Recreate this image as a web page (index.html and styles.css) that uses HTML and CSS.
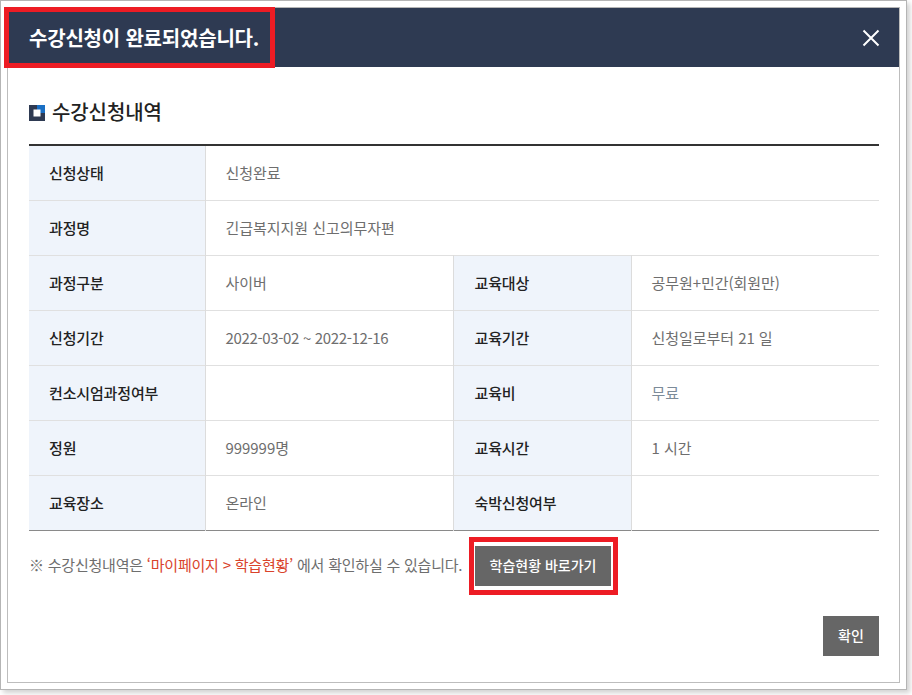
FILE: index.html
```html
<!DOCTYPE html>
<html lang="ko">
<head>
<meta charset="utf-8">
<title>수강신청</title>
<link rel="stylesheet" href="styles.css">
</head>
<body>
<div class="frame">
  <div class="modal">
    <header class="head">
      <h1 class="head-title">수강신청이 완료되었습니다.</h1>
      <svg class="close" width="18" height="18" viewBox="0 0 18 18"><path d="M1.5 1.5L16.5 16.5M16.5 1.5L1.5 16.5" stroke="#fff" stroke-width="2" fill="none"/></svg>
      <span class="mark mark-title"></span>
    </header>
    <main class="body">
      <h2 class="section">
        <svg class="bullet" width="16" height="16" viewBox="0 0 16 16"><rect width="16" height="16" fill="#2e3a52"/><rect x="8" width="8" height="8" fill="#1a6fc4"/><rect x="4.5" y="4.5" width="7" height="7" fill="#fff"/></svg>
        <span class="section-text">수강신청내역</span>
      </h2>
      <table class="info">
        <colgroup><col class="c1"><col class="c2"><col class="c3"><col class="c4"></colgroup>
        <tr><th>신청상태</th><td colspan="3">신청완료</td></tr>
        <tr><th>과정명</th><td colspan="3">긴급복지지원 신고의무자편</td></tr>
        <tr><th>과정구분</th><td>사이버</td><th>교육대상</th><td>공무원+민간(회원만)</td></tr>
        <tr><th>신청기간</th><td class="date">2022-03-02 ~ 2022-12-16</td><th>교육기간</th><td>신청일로부터 21 일</td></tr>
        <tr><th>컨소시엄과정여부</th><td></td><th>교육비</th><td class="blue">무료</td></tr>
        <tr><th>정원</th><td>999999명</td><th>교육시간</th><td>1 시간</td></tr>
        <tr><th>교육장소</th><td>온라인</td><th>숙박신청여부</th><td></td></tr>
      </table>
      <div class="notice">
        <p class="notice-text">※ 수강신청내역은 <span class="red">‘마이페이지 &gt; 학습현황’</span> 에서 확인하실 수 있습니다.</p>
        <div class="go-wrap">
          <a class="btn btn-go">학습현황 바로가기</a>
          <span class="mark mark-go"></span>
        </div>
      </div>
      <div class="foot"><a class="btn btn-ok">확인</a></div>
    </main>
  </div>
</div>
</body>
</html>
```
FILE: styles.css
```css
* { box-sizing: border-box; }
html, body { margin: 0; padding: 0; background: #fff; }
body { font-family: "Noto Sans CJK KR", "Noto Sans", sans-serif; width: 912px; height: 695px; overflow: hidden; }
.frame {
  width: 907px; height: 690px; padding: 6px;
  border: 1px solid #b5b5b5; background: #fff;
  box-shadow: 3px 3px 5px rgba(0,0,0,.18);
}
.modal { height: 676px; border: 1px solid #bdbdbd; border-top-color: #b5b5b5; background: #fff; }
.head {
  position: relative; height: 59px; background: #2e3a52;
  display: flex; align-items: center; justify-content: space-between;
  padding: 0 19px 0 21px;
}
.head-title { margin: 0; color: #fff; font-size: 20px; font-weight: 700; letter-spacing: -.2px; }
.mark { position: absolute; border: 5px solid #ed1c24; pointer-events: none; }
.mark-title { left: -4px; top: -1px; width: 271px; height: 61px; }
.body { padding: 0 20px 0 21px; }
.section {
  margin: 32px 0 0; height: 28px; display: flex; align-items: center; gap: 7px;
  font-size: 20px; font-weight: 500; color: #222; letter-spacing: -.1px;
}
.section-text { position: relative; top: -2px; }
.bullet { flex: none; }
.info {
  margin-top: 17px; width: 850px; border-collapse: collapse; table-layout: fixed;
  border-top: 2px solid #333; border-bottom: 1px solid #8a8a8a;
  font-size: 15px; letter-spacing: -.15px;
}
.c1 { width: 176px; }
.c3 { width: 178px; }
.c2 { width: 248px; }
.c4 { width: 248px; }
.info tr { height: 55px; }
.info tr + tr { border-top: 1px solid #e0e0e0; }
.info th {
  background: #eff4fb; color: #222; font-weight: 500; text-align: left;
  padding: 0 0 0 20px; border-right: 1px solid #dcdcdc;
}
.info td { color: #6e6e6e; padding: 0 0 0 20px; font-weight: 400; letter-spacing: -.05px; }
.info td + th { border-left: 1px solid #dcdcdc; padding-left: 21px; }
.info .blue { color: #7c8b99; }
.info .date { letter-spacing: -.35px; }
.notice { position: relative; display: flex; align-items: center; height: 40px; margin-top: 15px; font-size: 15px; color: #6e6e6e; }
.notice-text { margin: 0 0 2px; width: 446px; flex: none; white-space: nowrap; letter-spacing: -.22px; }
.red { color: #d9432b; }
.go-wrap { position: relative; }
.btn { display: flex; align-items: center; justify-content: center; background: #666; color: #fff; font-size: 14px; font-weight: 500; padding-bottom: 2px; }
.btn-go { width: 136px; height: 40px; }
.mark-go { left: -6px; top: -9px; width: 149px; height: 58px; }
.foot { display: flex; justify-content: flex-end; margin-top: 30px; }
.btn-ok { width: 56px; height: 40px; }
```
